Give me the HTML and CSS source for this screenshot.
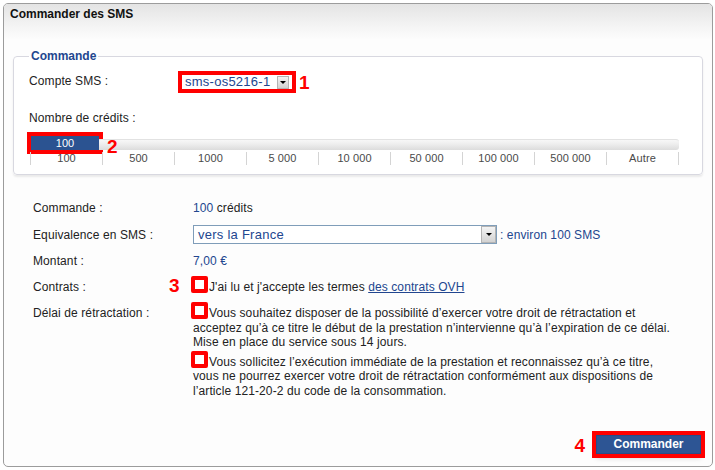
FILE: index.html
```html
<!DOCTYPE html>
<html lang="fr">
<head>
<meta charset="utf-8">
<title>Commander des SMS</title>
<link rel="stylesheet" href="styles.css">
</head>
<body>
<div class="panel">
  <div class="panel-head">Commander des SMS</div>
  <div class="panel-body">
    <fieldset class="box">
      <legend class="box-title">Commande</legend>
      <div class="account-row">
        <span class="field-label">Compte SMS :</span>
        <span class="select select-small mark">
          <span class="select-text">sms-os5216-1</span>
          <span class="select-btn"><span class="caret"></span></span>
        </span>
        <span class="step step-1">1</span>
      </div>
      <div class="credits-label">Nombre de crédits :</div>
      <div class="slider">
        <div class="slider-bar">
          <div class="slider-handle">100</div>
          <div class="slider-track"></div>
        </div>
        <div class="slider-scale">
          <span>100</span><span>500</span><span>1000</span><span>5 000</span><span>10 000</span><span>50 000</span><span>100 000</span><span>500 000</span><span>Autre</span>
        </div>
        <span class="step step-2">2</span>
      </div>
    </fieldset>

    <div class="summary">
      <div class="row row-a">
        <div class="label">Commande :</div>
        <div class="value"><span class="blue">100</span> crédits</div>
      </div>
      <div class="row row-a">
        <div class="label">Equivalence en SMS :</div>
        <div class="value value-flex">
          <span class="select select-wide">
            <span class="select-text">vers la France</span>
            <span class="select-btn select-btn-wide"><span class="caret"></span></span>
          </span>
          <span class="blue approx">: environ 100 SMS</span>
        </div>
      </div>
      <div class="row row-b">
        <div class="label">Montant :</div>
        <div class="value"><span class="blue">7,00 €</span></div>
      </div>
      <div class="row row-b">
        <div class="label">Contrats :</div>
        <div class="value value-rel">
          <span class="step step-3">3</span><span class="check"></span>J'ai lu et j'accepte les termes <a class="link" href="#">des contrats OVH</a>
        </div>
      </div>
      <div class="row row-top">
        <div class="label">Délai de rétractation :</div>
        <div class="value">
          <p class="para"><span class="check"></span>Vous souhaitez disposer de la possibilité d’exercer votre droit de rétractation et<br>acceptez qu’à ce titre le début de la prestation n’intervienne qu’à l’expiration de ce délai.<br>Mise en place du service sous 14 jours.</p>
          <p class="para para-2"><span class="check"></span>Vous sollicitez l’exécution immédiate de la prestation et reconnaissez qu’à ce titre,<br>vous ne pourrez exercer votre droit de rétractation conformément aux dispositions de<br>l’article 121-20-2 du code de la consommation.</p>
        </div>
      </div>
    </div>

    <div class="actions">
      <span class="step step-4">4</span>
      <button class="btn" type="button">Commander</button>
    </div>
  </div>
</div>
</body>
</html>
```

FILE: styles.css
```css
body {
  margin: 0;
  font-family: "Liberation Sans", Arial, sans-serif;
  font-size: 12px;
  line-height: 14px;
  letter-spacing: 0.1px;
  color: #222;
  background: #fff;
}

.panel {
  margin: 3px;
  width: 710px;
  height: 464px;
  box-sizing: border-box;
  border: 1px solid #9c9c9c;
  border-radius: 5px;
  background: #fdfdfd;
  display: flex;
  flex-direction: column;
  overflow: hidden;
}

.panel-head {
  height: 36px;
  box-sizing: border-box;
  padding: 3px 6px 0;
  font-weight: bold;
  line-height: 15px;
  letter-spacing: 0;
  color: #111;
  background: linear-gradient(#e4e4e4, #f6f6f6 70%, #fdfdfd);
}

.panel-body {
  flex: 1;
  display: flex;
  flex-direction: column;
  padding: 9px 9px 11px;
}

/* fieldset */
.box {
  margin: 0;
  padding: 0 15px 9px;
  min-width: 0;
  border: 1px solid #d8d8e0;
  border-radius: 4px;
  background: #fff;
  box-shadow: 0 2px 2px rgba(0, 0, 0, 0.08);
}

.box-title {
  padding: 0 2px;
  font-weight: bold;
  line-height: 14px;
  letter-spacing: 0;
  color: #22468f;
}

.account-row {
  display: flex;
  align-items: flex-start;
  margin-top: 8px;
  height: 22px;
}

.field-label {
  width: 149px;
  margin-top: 3px;
  flex: none;
}

.select {
  display: flex;
  background: #fff;
  box-sizing: border-box;
}

.select-small {
  width: 118px;
  height: 22px;
}

.mark {
  border: 4px solid #f00;
}

.select-text {
  flex: 1;
  padding-left: 3px;
  font-size: 13px;
  line-height: 14px;
  letter-spacing: 0.25px;
  color: #22468f;
  white-space: nowrap;
}

.select-btn {
  width: 12px;
  height: 13px;
  margin: 1px 3px 0 0;
  box-sizing: border-box;
  border: 1px solid #b4b4b4;
  background: linear-gradient(#f4f4f4, #d2d2d2);
  display: flex;
  align-items: center;
  justify-content: center;
}

.caret {
  width: 0;
  height: 0;
  border-left: 3px solid transparent;
  border-right: 3px solid transparent;
  border-top: 3px solid #000;
}

.step {
  color: #f00;
  font-weight: bold;
  font-size: 19px;
  line-height: 19px;
  letter-spacing: 0;
}

.step-1 {
  margin: 2px 0 0 3px;
}

.credits-label {
  margin-top: 18px;
}

/* slider */
.slider {
  position: relative;
  margin: 11px 0 0 1px;
  width: 649px;
}

.slider-bar {
  display: flex;
  align-items: flex-end;
  height: 14px;
}

.slider-handle {
  flex: none;
  width: 68px;
  height: 14px;
  margin-left: 1px;
  background: #2b5391;
  color: #fff;
  font-size: 11px;
  line-height: 14px;
  text-align: center;
  outline: 4px solid #f00;
}

.slider-track {
  flex: 1;
  height: 11px;
  box-sizing: border-box;
  border-top: 1px solid #e2e2e2;
  border-radius: 0 3px 3px 0;
  background: linear-gradient(#f7f7f7, #eeeeee 40%, #dcdcdc);
}

.slider-scale {
  display: grid;
  grid-template-columns: repeat(9, 72px);
  margin-top: 2px;
  width: max-content;
  border-right: 1px solid #d4d4d4;
}

.slider-scale span {
  border-left: 1px solid #d4d4d4;
  height: 13px;
  line-height: 13px;
  font-size: 11px;
  color: #4a4a4a;
  text-align: center;
}

.step-2 {
  position: absolute;
  left: 77px;
  top: 1px;
}

/* summary */
.summary {
  margin: 19px 0 0 20px;
}

.row {
  display: flex;
  align-items: center;
}

.row-a {
  height: 27px;
}

.row-b {
  height: 26px;
}

.row-top {
  align-items: flex-start;
  padding-top: 6px;
}

.label {
  width: 160px;
  flex: none;
}

.value {
  flex: 1;
  white-space: nowrap;
}

.value-flex {
  display: flex;
  align-items: center;
}

.value-rel {
  position: relative;
}

.blue {
  color: #22468f;
}

.select-wide {
  width: 304px;
  height: 19px;
  border: 1px solid #7f9db9;
  align-items: center;
}

.select-wide .select-text {
  padding-left: 4px;
  line-height: 17px;
}

.select-btn-wide {
  width: 15px;
  height: 17px;
  margin: 0;
}

.approx {
  margin-left: 3px;
}

.link {
  color: #22468f;
  text-decoration: underline;
}

.check {
  display: inline-block;
  width: 9px;
  height: 9px;
  margin: -4px 1px 0 -2px;
  border: 4px solid #f00;
  border-radius: 2px;
  background: #fff;
  vertical-align: -2px;
}

.step-3 {
  position: absolute;
  left: -24px;
  top: -4px;
}

.para {
  margin: 0;
  line-height: 14.5px;
}

.para-2 {
  margin-top: 5px;
}

/* actions */
.actions {
  margin-top: auto;
  margin-right: 2px;
  display: flex;
  justify-content: flex-end;
  align-items: center;
}

.step-4 {
  margin: 3px 11px 0 0;
}

.btn {
  width: 105px;
  height: 19px;
  padding: 0;
  box-sizing: border-box;
  border: 1px solid #284c88;
  background: #2d5594;
  color: #fff;
  font-family: inherit;
  font-size: 12px;
  font-weight: bold;
  line-height: 17px;
  letter-spacing: 0;
  outline: 4px solid #f00;
  box-shadow: 0 4px 5px rgba(0, 0, 0, 0.18);
  cursor: pointer;
}
```
